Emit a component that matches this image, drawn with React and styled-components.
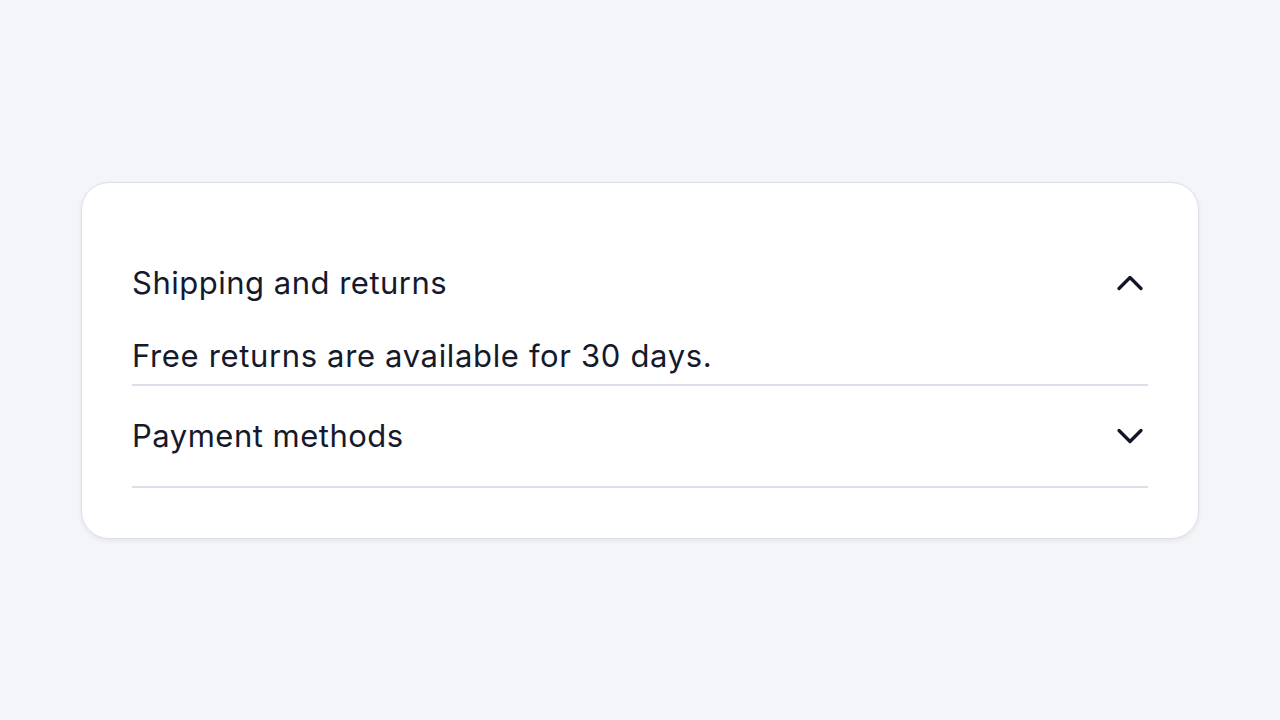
import React, { useState } from 'react';
import styled, { createGlobalStyle } from 'styled-components';

const GlobalStyle = createGlobalStyle`
    html, body {
        margin: 0;
        padding: 0;
        background: #f4f5f9;
        font-family: Inter, "Noto Sans", sans-serif;
    }
`;

const items = [
    { id: 'shipping', title: 'Shipping and returns', body: 'Free returns are available for 30 days.' },
    { id: 'payment', title: 'Payment methods', body: 'We accept all major credit cards and PayPal.' },
];

const App = () => {
    const [open, setOpen] = useState('shipping');
    return (
        <Page>
            <GlobalStyle />
            <Card>
                {items.map(item => (
                    <Item key={item.id}>
                        <Header onClick={() => setOpen(open === item.id ? null : item.id)}>
                            <Title>{item.title}</Title>
                            <Chevron up={open === item.id} />
                        </Header>
                        {open === item.id && <Body>{item.body}</Body>}
                    </Item>
                ))}
            </Card>
        </Page>
    );
};

const Chevron = ({ up }) => (
    <Icon width="36" height="36" viewBox="0 0 36 36" fill="none">
        <path
            d={up ? 'M7 23.5 L18 12.5 L29 23.5' : 'M7 12.5 L18 23.5 L29 12.5'}
            stroke="#111726"
            strokeWidth="3.3"
            strokeLinecap="round"
            strokeLinejoin="round"
        />
    </Icon>
);

const Page = styled.div`
    min-height: 720px;
    display: flex;
    align-items: center;
    justify-content: center;
    padding-bottom: 1px;
`;
const Card = styled.div`
    width: 1118px;
    box-sizing: border-box;
    padding: 50px;
    background: #ffffff;
    border: 1px solid #dbdfe7;
    border-radius: 28px;
    box-shadow: 0 2px 5px rgba(20, 26, 43, 0.07);
`;
const Item = styled.div`
    border-bottom: 2px solid #dcdfea;
`;
const Header = styled.button`
    all: unset;
    box-sizing: border-box;
    width: 100%;
    height: 100px;
    display: flex;
    align-items: center;
    justify-content: space-between;
    cursor: pointer;
`;
const Title = styled.span`
    font-size: 31px;
    color: #141a2b;
    letter-spacing: 0.5px;
`;
const Icon = styled.svg`
    display: block;
    flex-shrink: 0;
`;
const Body = styled.div`
    font-size: 31px;
    line-height: 46px;
    color: #141a2b;
    padding-bottom: 5px;
    letter-spacing: 0.65px;
`;

export default App;
